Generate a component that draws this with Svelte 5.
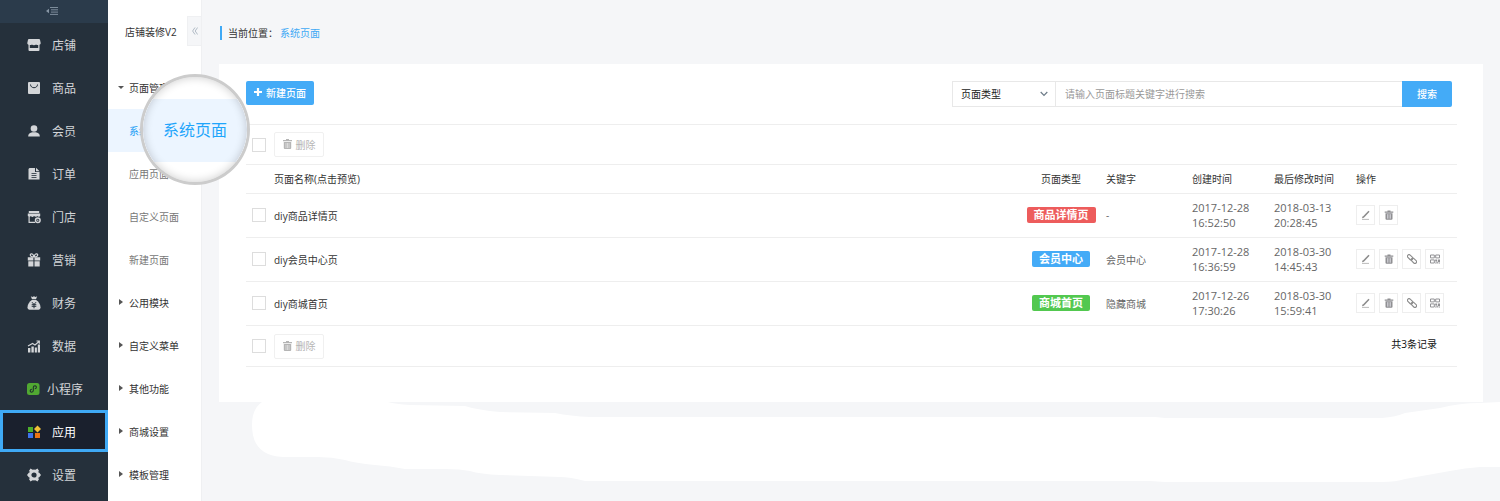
<script>
  const menu = [
    { name: "店铺", icon: "shop" },
    { name: "商品", icon: "bag" },
    { name: "会员", icon: "user" },
    { name: "订单", icon: "order" },
    { name: "门店", icon: "store" },
    { name: "营销", icon: "gift" },
    { name: "财务", icon: "money" },
    { name: "数据", icon: "chart" },
    { name: "小程序", icon: "mini" },
    { name: "应用", icon: "apps" },
    { name: "设置", icon: "gear" },
  ];

  const submenu = [
    { name: "页面管理", group: true, open: true },
    { name: "系统页面" },
    { name: "应用页面" },
    { name: "自定义页面" },
    { name: "新建页面" },
    { name: "公用模块", group: true },
    { name: "自定义菜单", group: true },
    { name: "其他功能", group: true },
    { name: "商城设置", group: true },
    { name: "模板管理", group: true },
  ];

  const rows = [
    {
      title: "diy商品详情页",
      type: "商品详情页",
      color: "red",
      keyword: "-",
      created: ["2017-12-28", "16:52:50"],
      updated: ["2018-03-13", "20:28:45"],
      actions: ["edit", "trash"],
    },
    {
      title: "diy会员中心页",
      type: "会员中心",
      color: "blue",
      keyword: "会员中心",
      created: ["2017-12-28", "16:36:59"],
      updated: ["2018-03-30", "14:45:43"],
      actions: ["edit", "trash", "link", "qrcode"],
    },
    {
      title: "diy商城首页",
      type: "商城首页",
      color: "green",
      keyword: "隐藏商城",
      created: ["2017-12-26", "17:30:26"],
      updated: ["2018-03-30", "15:59:41"],
      actions: ["edit", "trash", "link", "qrcode"],
    },
  ];

  const labels = { edit: "编辑", trash: "删除", link: "复制链接", qrcode: "二维码" };

  let activeMenu = "应用";
  let activePage = "系统页面";
  let pageType = "页面类型";
  let keyword = "";
  let selected = [];

  $: allSelected = selected.length === rows.length;

  function toggleAll() {
    selected = allSelected ? [] : rows.map((row) => row.title);
  }
</script>

<div class="page">
  <nav class="main-nav">
    <button class="fold" aria-label="收起菜单">
      <svg width="12" height="8" viewBox="0 0 12 8">
        <path d="M4 .5h8M5 2.8h7M5 5.1h7M4 7.4h8" stroke="#8796a5" stroke-width=".9" />
        <path d="M0 4l3-2.2v4.4z" fill="#8796a5" />
      </svg>
    </button>
    {#each menu as item}
      <a
        class="nav-item"
        class:active={item.name === activeMenu}
        class:wide={item.name.length > 2}
        href="#{item.icon}"
      >
        <svg width="14" height="14" viewBox="0 0 14 14" fill="#d3d5d8">
          {#if item.icon === "shop"}
            <path d="M2 1h10a1 1 0 0 1 1 .8L13.7 5c0 1-.7 1.5-1.2 1.7V12a1 1 0 0 1-1 1h-9a1 1 0 0 1-1-1V6.700C.8 6.400.3 6 .3 5L1 1.800A1 1 0 0 1 2 1z" />
            <path d="M2.800 7c1 .3 1.700-.2 2.100-.6 1 1 3 1 4.200 0 .6.5 1.300.8 2.100.6v3H2.800z" fill="#25303b" />
          {:else if item.icon === "bag"}
            <rect x="1" y="1" width="12" height="12" rx="1" />
            <path d="M3.500 3.500c0 4.300 7 4.300 7 0" fill="none" stroke="#25303b" />
          {:else if item.icon === "user"}
            <circle cx="7" cy="4.500" r="3.300" />
            <path d="M1.200 12.500c0-3 2-3.700 4-4.200h3.600c2 .5 4 1.200 4 4.200z" />
          {:else if item.icon === "order"}
            <path d="M2.500 1H8v4h4.500v7.500H1.500V2z" />
            <path d="M9 .8L12.600 4.200H9z" />
            <path d="M4.500 6.500h5M4.500 8.500h5M4.500 10.500h5" stroke="#25303b" stroke-width=".8" />
          {:else if item.icon === "store"}
            <path d="M1.800 1h10.400v2H1.800zM.8 3.500h12.400V6c-1 1.200-2.200 1-3 0-1 1.200-2.200 1-3.200 0-1 1.200-2.200 1.200-3.200 0-1 1.200-2 1.200-3 0z" />
            <path d="M2.100 7v5.300h6" fill="none" stroke="#d3d5d8" stroke-width="1.200" />
            <circle cx="10.800" cy="10.200" r="2.300" fill="#25303b" stroke="#d3d5d8" stroke-width="1.500" />
            <circle cx="10.800" cy="10.200" r=".7" />
          {:else if item.icon === "gift"}
            <path d="M.8 4.300h5.600v3.200H.8zM7.500 4.300h5.700v3.200H7.500zM1.300 8.300h5.100v5.200H1.300zM7.500 8.300h5.200v5.200H7.500z" />
            <path d="M7 4C5 4 3 3.300 3.300 1.700 4 0 6.500 1 7 4c.5-3 3-4 3.700-2.300C11 3.300 9 4 7 4z" fill="none" stroke="#d3d5d8" stroke-width="1.200" />
          {:else if item.icon === "money"}
            <path d="M3.800.3l1.600.7L7 .3 8.600 1l1.600-.7L9 3.200H5z" />
            <path d="M4.800 4h4.400c2 1.500 4.300 4 4.300 7.300 0 1.700-.8 2.400-2 2.400h-9C1.300 13.700.5 13 .5 11.300.5 8 2.800 5.500 4.800 4z" />
            <path d="M5 6.200l2 2.300 2-2.300M4.700 8.700h4.600M4.700 10.300h4.600M7 8.500v3.800" fill="none" stroke="#25303b" />
          {:else if item.icon === "chart"}
            <path d="M1 9h2.400v4.500H1zM4.400 7.500h2.400v6H4.400zM7.800 8.500h2.100v5H7.800zM10.800 5.500H13v8h-2.200z" />
            <path d="M1 7l4.500-2.500L8 6l4-3.500M9.500 2H12.300v2.700" fill="none" stroke="#d3d5d8" stroke-width="1.200" />
          {:else if item.icon === "mini"}
            <rect x="0" y="1" width="12.500" height="12" rx="2.500" fill="#51a832" />
            <path d="M4.900 7.300c-2-.1-2.400 2.800-.3 2.900 1.100 0 1.700-.7 1.700-1.600V5.400c0-.9.7-1.600 1.700-1.600 2 .1 1.800 2.900-.2 2.900" fill="none" stroke="#20312e" stroke-width="1.100" />
          {:else if item.icon === "apps"}
            <rect x="1" y="2" width="5" height="5" fill="#4caf2c" />
            <rect x="1" y="8" width="5" height="5" fill="#3d74ec" />
            <rect x="8" y="8" width="5" height="5" fill="#ec7414" />
            <path d="M10.500.5L14 4l-3.500 3.500L7 4z" fill="#f2c037" />
          {:else}
            <circle cx="7" cy="7" r="4" fill="none" stroke="#d3d5d8" stroke-width="2.800" />
            <path d="M3.500.5L6 2 4 4 1.800 3.300zM10.500.5L8 2l2 2 2.200-.7zM0 7l2-2.500v5zM14 7l-2-2.500v5zM3.500 13.500L6 12l-2-2-2.200.7zM10.500 13.500L8 12l2-2 2.200.7z" />
          {/if}
        </svg>
        <span>{item.name}</span>
      </a>
    {/each}
  </nav>

  <aside class="sub-nav">
    <header>
      <span>店铺装修V2</span>
      <button class="collapse" aria-label="收起">
        <svg width="6" height="8" viewBox="0 0 6 8" fill="none" stroke="#a9b4c0" stroke-width=".9">
          <path d="M3 .5L.6 4 3 7.500M5.600.5L3.200 4l2.400 3.500" />
        </svg>
      </button>
    </header>
    {#each submenu as item}
      <a
        class="sub-item"
        class:group={item.group}
        class:active={item.name === activePage}
        href="#{item.name}"
      >
        {#if item.group}
          <i class="caret" class:open={item.open}></i>
        {/if}
        {item.name}
      </a>
    {/each}
    <div class="lens" aria-hidden="true">
      <span>{activePage}</span>
    </div>
  </aside>

  <main>
    <div class="crumbs">
      <span>当前位置：</span>
      <a href="#system">系统页面</a>
    </div>

    <section class="card">
      <div class="toolbar">
        <button class="primary add">
          <svg width="8" height="8" viewBox="0 0 8 8">
            <path d="M4 0v8M0 4h8" stroke="#fff" stroke-width="2.200" />
          </svg>
          新建页面
        </button>
        <form class="search" on:submit|preventDefault>
          <div class="select">
            <select aria-label="页面类型" bind:value={pageType}>
              <option>页面类型</option>
              {#each rows as row}
                <option>{row.type}</option>
              {/each}
            </select>
            <svg width="8" height="6" viewBox="0 0 8 6">
              <path d="M.7 1L4 4.300 7.300 1" fill="none" stroke="#6d7b88" stroke-width="1.200" />
            </svg>
          </div>
          <input
            type="text"
            aria-label="关键字"
            placeholder="请输入页面标题关键字进行搜索"
            bind:value={keyword}
          />
          <button class="primary">搜索</button>
        </form>
      </div>

      <div class="batch top">
        <input type="checkbox" aria-label="全选" checked={allSelected} on:change={toggleAll} />
        <button class="delete" disabled={!selected.length}>
          <svg width="9" height="10" viewBox="0 0 9 10" fill="#b5b5b5">
            <path d="M3 0h3v1h3v1.300H0V1h3zM.8 3h7.400v6a1 1 0 0 1-1 1H1.800a1 1 0 0 1-1-1z" />
            <path d="M3 4v5M4.500 4v5M6 4v5" stroke="#fff" stroke-width=".5" />
          </svg>
          删除
        </button>
      </div>

      <table>
        <thead>
          <tr>
            <th class="check"></th>
            <th>页面名称(点击预览)</th>
            <th class="type">页面类型</th>
            <th class="keyword">关键字</th>
            <th class="time">创建时间</th>
            <th class="time">最后修改时间</th>
            <th class="actions">操作</th>
          </tr>
        </thead>
        <tbody>
          {#each rows as row}
            <tr>
              <td class="check">
                <input
                  type="checkbox"
                  aria-label={row.title}
                  value={row.title}
                  bind:group={selected}
                />
              </td>
              <td><a class="title" href="#preview">{row.title}</a></td>
              <td class="type"><span class="badge {row.color}">{row.type}</span></td>
              <td>{row.keyword}</td>
              <td class="date">{row.created[0]}<br />{row.created[1]}</td>
              <td class="date">{row.updated[0]}<br />{row.updated[1]}</td>
              <td>
                <div class="buttons">
                  {#each row.actions as action}
                    <button aria-label={labels[action]}>
                      <svg width="10" height="10" viewBox="0 0 10 10">
                        {#if action === "edit"}
                          <path d="M2.300 7.200L8 1.300" stroke="#8b8b8b" stroke-width="1.600" />
                          <path d="M1 8.200l.6-2 1.500 1.500z" fill="#8b8b8b" />
                          <path d="M1 9.400h7" stroke="#aaa" stroke-width=".8" />
                        {:else if action === "trash"}
                          <path d="M3.500.5h3v1h2.800v1.200H.7V1.500h2.800zM1.500 3.300h7v5.400a1 1 0 0 1-1 1h-5a1 1 0 0 1-1-1z" fill="#8f8f92" />
                          <path d="M3.500 4.200v4.500M5 4.200v4.500M6.500 4.200v4.500" stroke="#d5d5dc" stroke-width=".8" />
                        {:else if action === "link"}
                          <g fill="none" stroke="#8b8b8b" stroke-width="1.100">
                            <rect x="0" y="1.700" width="6.200" height="3.200" rx="1.600" transform="rotate(45 3.100 3.300)" />
                            <rect x="3.800" y="5.200" width="6.200" height="3.200" rx="1.600" transform="rotate(45 6.900 6.800)" />
                          </g>
                        {:else}
                          <path d="M.5 1h3.800v2.900H.5zM5.700 1h3.800v2.900H5.700zM.5 5.900h3.800v3.100H.5z" fill="none" stroke="#929295" />
                          <path d="M5.200 5.400h2v2h-2zM8 5.400h2v2.800H8zM6.400 7.800h1.400v1.700H6.400zM5.200 8.500h.8v1h-.8zM8.600 8.800H10v.7H8.600z" fill="#929295" />
                        {/if}
                      </svg>
                    </button>
                  {/each}
                </div>
              </td>
            </tr>
          {/each}
        </tbody>
      </table>

      <div class="batch bottom">
        <input type="checkbox" aria-label="全选" checked={allSelected} on:change={toggleAll} />
        <button class="delete" disabled={!selected.length}>
          <svg width="9" height="10" viewBox="0 0 9 10" fill="#b5b5b5">
            <path d="M3 0h3v1h3v1.300H0V1h3zM.8 3h7.400v6a1 1 0 0 1-1 1H1.800a1 1 0 0 1-1-1z" />
            <path d="M3 4v5M4.500 4v5M6 4v5" stroke="#fff" stroke-width=".5" />
          </svg>
          删除
        </button>
        <span class="total">共{rows.length}条记录</span>
      </div>
    </section>

    <svg class="smear" viewBox="252 401 1248 81" preserveAspectRatio="none" fill="#fff">
      <path d="M262 401H388Q395 403 410 404L465 405Q478 409 500 411L555 412Q570 415 590 416H1155L1165 417H1382Q1396 416 1405 412L1440 407Q1460 402 1480 402L1500 401V466L1480 466Q1465 467 1450 470L1405 478Q1396 481 1382 481H1165L1150 480H585Q570 476 560 476L500 474Q480 473 470 470Q460 468 445 468L405 468Q390 465 375 464Q355 462 345 459Q332 456 318 456L283 456Q252 455 252 424Q252 408 262 401Z" />
    </svg>
  </main>
</div>

<style>
  :global(body) {
    background: #f5f6f8;
  }

  .page {
    display: flex;
    min-height: 100vh;
    font-family: "Open Sans", "Noto Sans CJK SC", sans-serif;
    font-size: 10px;
    color: #333;
  }

  button,
  input,
  select {
    font: inherit;
    box-sizing: border-box;
    margin: 0;
  }

  button {
    cursor: pointer;
  }

  a {
    text-decoration: none;
    color: inherit;
  }

  svg {
    display: block;
    flex: none;
  }

  .main-nav {
    width: 108px;
    flex: none;
    background: #25303b;
  }

  .fold {
    display: flex;
    align-items: center;
    justify-content: center;
    width: 100%;
    height: 23px;
    padding: 0 4px 2px 0;
    border: 0;
    background: #2b3b4b;
  }

  .nav-item {
    display: flex;
    align-items: center;
    gap: 11px;
    box-sizing: border-box;
    height: 42px;
    margin-bottom: 1px;
    padding: 2px 0 0 27px;
    font-size: 12px;
    color: #d3d5d8;
  }

  .nav-item.wide {
    gap: 6px;
  }

  .nav-item.active {
    padding: 2px 0 0 24px;
    border: 3px solid #3fa9f5;
    background: #1a202d;
    color: #fff;
  }

  .sub-nav {
    position: relative;
    box-sizing: border-box;
    width: 94px;
    flex: none;
    background: #fff;
    border-right: 1px solid #eff0f2;
  }

  .sub-nav header {
    display: flex;
    align-items: center;
    justify-content: space-between;
    box-sizing: border-box;
    height: 66px;
    padding: 0 0 4px 17px;
    white-space: nowrap;
  }

  .collapse {
    display: flex;
    align-items: center;
    justify-content: center;
    width: 14px;
    height: 30px;
    padding: 0;
    border: 1px solid #eff0f2;
    border-right: 0;
    background: #f5f6f8;
  }

  .sub-item {
    display: flex;
    align-items: center;
    box-sizing: border-box;
    height: 43px;
    padding: 0 0 1px 21px;
    color: #777;
  }

  .sub-item.group {
    padding-left: 11px;
    color: #333;
  }

  .sub-item.active {
    background: #ecf5ff;
    color: #1f9ff5;
  }

  .caret {
    width: 0;
    border: 3px solid transparent;
    border-left: 4px solid #555;
    margin-right: 3px;
  }

  .caret.open {
    border: 3px solid transparent;
    border-top-color: #555;
    margin: 3px 5px 0 -1px;
  }

  .lens {
    position: absolute;
    top: 74px;
    left: 32px;
    z-index: 2;
    display: flex;
    align-items: center;
    box-sizing: border-box;
    width: 110px;
    height: 111px;
    padding-top: 2px;
    overflow: hidden;
    border: 3px solid #ccc;
    border-radius: 50%;
    background: #fff;
    font-size: 16px;
    color: #1fa5fb;
  }

  .lens::after {
    content: "";
    position: absolute;
    inset: 0;
    border-radius: 50%;
    box-shadow: inset 0 0 10px rgba(0, 0, 0, 0.2);
  }

  .lens span {
    flex: 1;
    line-height: 63px;
    text-align: center;
    background: #ecf5ff;
  }

  main {
    flex: 1;
    min-width: 0;
  }

  .crumbs {
    display: flex;
    align-items: center;
    gap: 2px;
    height: 14px;
    margin: 26px 18px 24px;
    padding-left: 6px;
    border-left: 2px solid #3fa9f5;
    line-height: 12px;
  }

  .crumbs a {
    color: #3fa9f5;
  }

  .card {
    margin: 0 17px;
    padding: 17px 26px 35px 27px;
    background: #fff;
  }

  .toolbar {
    display: flex;
    align-items: flex-start;
    justify-content: space-between;
    padding: 0 5px 17px 0;
  }

  .primary {
    border: 0;
    background: #44abf7;
    color: #fff;
    font-weight: 500;
  }

  .add {
    display: flex;
    align-items: center;
    gap: 4px;
    height: 24px;
    padding: 0 8px 2px;
    border-radius: 2px;
  }

  .search {
    display: flex;
    width: 500px;
    height: 26px;
  }

  .select {
    position: relative;
    width: 104px;
  }

  .select select {
    appearance: none;
    width: 100%;
    height: 100%;
    padding: 0 8px;
    border: 1px solid #e8e8e8;
    border-radius: 0;
    background: #fff;
    color: #222;
  }

  .select svg {
    position: absolute;
    top: 10px;
    right: 8px;
    pointer-events: none;
  }

  .search > input {
    flex: 1;
    min-width: 0;
    padding: 0 9px;
    border: 1px solid #e8e8e8;
    border-width: 1px 0;
    border-radius: 0;
    outline: none;
  }

  .search > input::placeholder {
    color: #999;
  }

  .search .primary {
    width: 50px;
    padding: 0 0 2px;
    border-radius: 0 2px 2px 0;
  }

  input[type="checkbox"] {
    display: block;
    appearance: none;
    width: 14px;
    height: 14px;
    border: 1px solid #ddd;
    background: #fff;
  }

  input[type="checkbox"]:checked {
    background: #44abf7;
  }

  .batch {
    display: flex;
    align-items: center;
    gap: 8px;
    box-sizing: border-box;
    padding-left: 6px;
  }

  .batch.top {
    height: 40px;
    border-top: 1px solid #eee;
  }

  .batch.bottom {
    height: 41px;
    border-bottom: 1px solid #eee;
  }

  .delete {
    display: flex;
    align-items: center;
    justify-content: center;
    gap: 4px;
    width: 50px;
    height: 25px;
    padding: 0 0 1px;
    border: 1px solid #f0f0f0;
    border-radius: 2px;
    background: #fff;
    color: #b5b5b5;
  }

  .total {
    margin-left: auto;
    padding: 0 20px 6px 0;
    color: #111;
  }

  table {
    width: 100%;
    table-layout: fixed;
    border-collapse: collapse;
  }

  th,
  td {
    padding: 0 0 1px;
    border-bottom: 1px solid #eee;
    text-align: left;
  }

  th {
    height: 27px;
    border-top: 1px solid #eee;
    font-weight: 400;
  }

  td {
    height: 42px;
    color: #666;
  }

  th.check {
    width: 28px;
  }

  td.check {
    padding-left: 6px;
  }

  th.type {
    width: 90px;
  }

  .type {
    text-align: center;
  }

  .keyword {
    width: 86px;
  }

  .time {
    width: 82px;
  }

  .actions {
    width: 101px;
  }

  .title {
    color: #333;
  }

  .date {
    font-size: 11px;
    line-height: 15px;
  }

  .badge {
    display: inline-block;
    padding: 0 7px;
    border-radius: 2px;
    font-size: 11px;
    font-weight: 700;
    line-height: 16px;
    color: #fff;
  }

  .red {
    background: #ed5c5c;
  }

  .blue {
    background: #44abf7;
  }

  .green {
    background: #52c84f;
  }

  .buttons {
    display: flex;
    gap: 4px;
  }

  .buttons button {
    display: flex;
    align-items: center;
    justify-content: center;
    width: 19px;
    height: 20px;
    padding: 0;
    border: 1px solid #eee;
    background: #fff;
  }

  .smear {
    box-sizing: border-box;
    width: 100%;
    height: 81px;
    padding-left: 50px;
  }
</style>
